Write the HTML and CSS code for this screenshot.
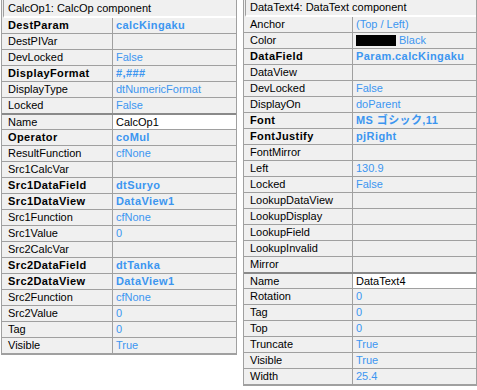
FILE: index.html
```html
<!DOCTYPE html>
<html>
<head>
    <link rel="stylesheet" href="styles.css">
</head>
<body>
    <div class="inspectors">
        <div class="inspector" id="calc-op">
            <div class="caption">CalcOp1: CalcOp component</div>
            <div class="row bold"><span class="prop">DestParam</span><span class="val">calcKingaku</span></div>
            <div class="row"><span class="prop">DestPIVar</span><span class="val"></span></div>
            <div class="row"><span class="prop">DevLocked</span><span class="val">False</span></div>
            <div class="row bold"><span class="prop">DisplayFormat</span><span class="val">#,###</span></div>
            <div class="row"><span class="prop">DisplayType</span><span class="val">dtNumericFormat</span></div>
            <div class="row"><span class="prop">Locked</span><span class="val">False</span></div>
            <div class="row name"><span class="prop">Name</span><span class="val">CalcOp1</span></div>
            <div class="row bold"><span class="prop">Operator</span><span class="val">coMul</span></div>
            <div class="row"><span class="prop">ResultFunction</span><span class="val">cfNone</span></div>
            <div class="row"><span class="prop">Src1CalcVar</span><span class="val"></span></div>
            <div class="row bold"><span class="prop">Src1DataField</span><span class="val">dtSuryo</span></div>
            <div class="row bold"><span class="prop">Src1DataView</span><span class="val">DataView1</span></div>
            <div class="row"><span class="prop">Src1Function</span><span class="val">cfNone</span></div>
            <div class="row"><span class="prop">Src1Value</span><span class="val">0</span></div>
            <div class="row"><span class="prop">Src2CalcVar</span><span class="val"></span></div>
            <div class="row bold"><span class="prop">Src2DataField</span><span class="val">dtTanka</span></div>
            <div class="row bold"><span class="prop">Src2DataView</span><span class="val">DataView1</span></div>
            <div class="row"><span class="prop">Src2Function</span><span class="val">cfNone</span></div>
            <div class="row"><span class="prop">Src2Value</span><span class="val">0</span></div>
            <div class="row"><span class="prop">Tag</span><span class="val">0</span></div>
            <div class="row"><span class="prop">Visible</span><span class="val">True</span></div>
        </div>

        <div class="inspector" id="data-text">
            <div class="caption">DataText4: DataText component</div>
            <div class="row"><span class="prop">Anchor</span><span class="val">(Top / Left)</span></div>
            <div class="row"><span class="prop">Color</span><span class="val"><i class="swatch"></i>Black</span></div>
            <div class="row bold"><span class="prop">DataField</span><span class="val">Param.calcKingaku</span></div>
            <div class="row"><span class="prop">DataView</span><span class="val"></span></div>
            <div class="row"><span class="prop">DevLocked</span><span class="val">False</span></div>
            <div class="row"><span class="prop">DisplayOn</span><span class="val">doParent</span></div>
            <div class="row bold"><span class="prop">Font</span><span class="val">MS ゴシック,11</span></div>
            <div class="row bold"><span class="prop">FontJustify</span><span class="val">pjRight</span></div>
            <div class="row"><span class="prop">FontMirror</span><span class="val"></span></div>
            <div class="row"><span class="prop">Left</span><span class="val">130.9</span></div>
            <div class="row"><span class="prop">Locked</span><span class="val">False</span></div>
            <div class="row"><span class="prop">LookupDataView</span><span class="val"></span></div>
            <div class="row"><span class="prop">LookupDisplay</span><span class="val"></span></div>
            <div class="row"><span class="prop">LookupField</span><span class="val"></span></div>
            <div class="row"><span class="prop">LookupInvalid</span><span class="val"></span></div>
            <div class="row"><span class="prop">Mirror</span><span class="val"></span></div>
            <div class="row name"><span class="prop">Name</span><span class="val">DataText4</span></div>
            <div class="row"><span class="prop">Rotation</span><span class="val">0</span></div>
            <div class="row"><span class="prop">Tag</span><span class="val">0</span></div>
            <div class="row"><span class="prop">Top</span><span class="val">0</span></div>
            <div class="row"><span class="prop">Truncate</span><span class="val">True</span></div>
            <div class="row"><span class="prop">Visible</span><span class="val">True</span></div>
            <div class="row"><span class="prop">Width</span><span class="val">25.4</span></div>
        </div>
    </div>
</body>
</html>
```

FILE: styles.css
```css
body {
    margin: 0;
    background-color: white;
    font-family: "Liberation Sans", Arial, "Noto Sans CJK JP", sans-serif;
    font-size: 11px;
    color: black;
}

.inspectors {
    display: flex;
    align-items: flex-start;
    gap: 6px;
}

.inspector {
    display: flex;
    flex-direction: column;
    border-left: 1px solid #a0a0a0;
    border-right: 1px solid #a0a0a0;
    border-bottom: 1px solid #a0a0a0;
    background-color: #f0f0f0;
}

#calc-op {
    width: 236px;
    box-sizing: border-box;
    margin-left: 1px;
}

#data-text {
    width: 234px;
    box-sizing: border-box;
}

.caption {
    height: 16px;
    line-height: 16px;
    padding-left: 4px;
    margin-left: 1px;
    border-left: 1px solid #a0a0a0;
    border-bottom: 2px solid white;
    white-space: nowrap;
}

#data-text .caption {
    height: 15px;
    line-height: 15px;
}

.row {
    display: grid;
    grid-template-columns: 111px 1fr;
    height: 16px;
    box-sizing: border-box;
    border-bottom: 1px solid #a0a0a0;
    line-height: 15px;
}

#data-text .row {
    grid-template-columns: 109px 1fr;
}

.prop {
    padding-left: 6px;
    border-right: 1px solid #a0a0a0;
    white-space: nowrap;
    overflow: hidden;
}

.val {
    padding-left: 3px;
    color: #3c96f0;
    white-space: nowrap;
    overflow: hidden;
    display: flex;
    align-items: center;
}

.bold .prop,
.bold .val {
    font-weight: bold;
    letter-spacing: 0.4px;
}

.name {
    height: 17px;
    margin-top: -1px;
    border-top: 2px solid #8a8a8a;
    line-height: 14px;
}

.name .val {
    background-color: white;
    color: black;
}

.swatch {
    display: inline-block;
    width: 40px;
    height: 11px;
    background-color: black;
    margin-right: 3px;
}
```
